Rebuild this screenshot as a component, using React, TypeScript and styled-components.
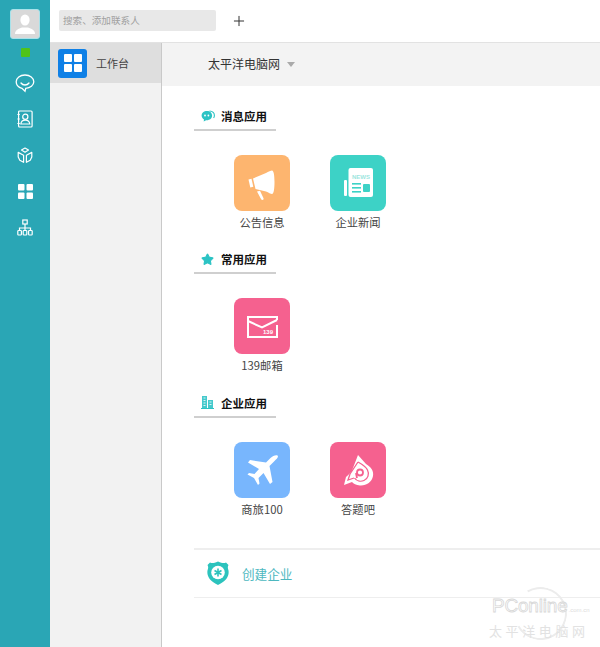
import styled, { createGlobalStyle } from 'styled-components';
import { Plus, Star } from 'lucide-react';
import type { ReactNode } from 'react';

const GlobalStyle = createGlobalStyle`
	html, body {
		margin: 0;
		padding: 0;
		background: #fff;
		font-family: "Noto Sans CJK SC", "Liberation Sans", sans-serif;
		color: #333;
	}
`;

const Page = styled.div`
	position: relative;
	display: flex;
	width: 600px;
	height: 647px;
	overflow: hidden;
`;

const Rail = styled.nav`
	width: 50px;
	flex: none;
	background: #2aa6b5;
	display: flex;
	flex-direction: column;
	align-items: center;
	padding-top: 9px;
	box-sizing: border-box;
`;

const Avatar = styled.div`
	width: 28px;
	height: 28px;
	border-radius: 3px;
	border: 1px solid #a8e2ea;
	background: #d9d9d9;
	display: flex;
	align-items: center;
	justify-content: center;
`;

const Status = styled.div`
	width: 9px;
	height: 9px;
	flex: none;
	margin-top: 9px;
	margin-bottom: 8px;
	border-radius: 1px;
	background: #4fc31a;
`;

const RailIcon = styled.div`
	width: 50px;
	height: 36px;
	display: flex;
	align-items: center;
	justify-content: center;
`;

const Body = styled.div`
	flex: 1;
	display: flex;
	flex-direction: column;
	min-width: 0;
`;

const TopBar = styled.header`
	height: 41px;
	flex: none;
	border-bottom: 1px solid #e2e2e2;
	display: flex;
	align-items: center;
	padding: 0 9px 1px;
`;

const Search = styled.div`
	width: 153px;
	height: 21px;
	padding-left: 4px;
	background: #e8e8e8;
	border-radius: 2px;
	font-size: 9.6px;
	line-height: 21px;
	color: #a0a0a0;
`;

const AddButton = styled.div`
	margin-left: 15px;
	display: flex;
	color: #333;
`;

const Columns = styled.div`
	flex: 1;
	display: flex;
	min-height: 0;
`;

const Side = styled.aside`
	width: 112px;
	flex: none;
	box-sizing: border-box;
	background: #f2f2f2;
	border-right: 1px solid #c9c9c9;
`;

const SideItem = styled.div`
	height: 40px;
	background: #dedede;
	display: flex;
	align-items: center;
	gap: 9px;
	padding-left: 8px;
	font-size: 11px;
	color: #444;
`;

const SideLogo = styled.div`
	width: 29px;
	height: 29px;
	border-radius: 3px;
	background: #0f80e6;
	display: flex;
	align-items: center;
	justify-content: center;
`;

const Main = styled.main`
	flex: 1;
	min-width: 0;
	display: flex;
	flex-direction: column;
`;

const OrgBar = styled.div`
	height: 41px;
	flex: none;
	padding: 0 0 2px 46px;
	background: #f3f3f3;
	display: flex;
	align-items: center;
	font-size: 12px;
	color: #333;
`;

const Caret = styled.span`
	margin-left: 7px;
	margin-top: 2px;
	width: 0;
	height: 0;
	border-left: 4px solid transparent;
	border-right: 4px solid transparent;
	border-top: 5px solid #aaa;
`;

const Content = styled.div`
	padding: 17px 0 0 32px;
`;

const Section = styled.section`
	height: 143.3px;
`;

const SectionHead = styled.div`
	width: 82px;
	height: 28px;
	border-bottom: 2px solid #cfcfcf;
	display: flex;
	align-items: center;
	box-sizing: border-box;
`;

const HeadIcon = styled.div`
	width: 27px;
	display: flex;
	justify-content: center;
`;

const HeadTitle = styled.h3`
	margin: 0;
	font-size: 11.5px;
	font-weight: 700;
	color: #111;
	white-space: nowrap;
`;

const AppRow = styled.div`
	display: flex;
	gap: 40px;
	padding: 24px 0 0 40px;
`;

const AppItem = styled.div`
	width: 56px;
	display: flex;
	flex-direction: column;
	align-items: center;
`;

const Tile = styled.div<{ $bg: string }>`
	width: 56px;
	height: 56px;
	border-radius: 8px;
	background: ${(p) => p.$bg};
	display: flex;
`;

const AppLabel = styled.span`
	margin-top: 3px;
	font-size: 11.3px;
	line-height: 16px;
	color: #444;
	white-space: nowrap;
`;

const CreateRow = styled.div`
	margin-top: 15px;
	height: 50px;
	box-sizing: border-box;
	border-top: 2px solid #eee;
	border-bottom: 1px solid #eee;
	display: flex;
	align-items: center;
	padding-left: 13px;
	gap: 13px;
	font-size: 12.6px;
	color: #4db8bf;
`;

const Watermark = styled.div`
	position: absolute;
	left: 489px;
	top: 585px;
	width: 106px;
	height: 58px;
	pointer-events: none;
`;

const WatermarkArc = styled.div`
	position: absolute;
	left: 25px;
	top: 2px;
	width: 53px;
	height: 53px;
	box-sizing: border-box;
	border: 2px solid #ececec;
	border-left-color: transparent;
	border-radius: 50%;
	transform: rotate(15deg);
`;

const WatermarkBrand = styled.div`
	position: relative;
	margin-top: 10px;
	padding-left: 3px;
	font-family: "Liberation Sans", sans-serif;
	font-size: 19px;
	line-height: 22px;
	letter-spacing: -0.2px;
	color: #fff;
	-webkit-text-stroke: 0.8px #d8d8d8;
`;

const WatermarkDomain = styled.span`
	font-size: 6px;
	letter-spacing: 0;
	margin-left: 1px;
	color: #ddd;
	-webkit-text-stroke: 0;
`;

const WatermarkCn = styled.div`
	position: relative;
	margin-top: 2px;
	font-size: 13px;
	line-height: 16px;
	white-space: nowrap;
	letter-spacing: 3.6px;
	color: #e2e2e2;
`;

const GridIcon = ({ size, cell, gap }: { size: number; cell: number; gap: number }) => {
	const second = cell + gap;
	return (
		<svg width={size} height={size} viewBox={`0 0 ${size} ${size}`}>
			<rect width={cell} height={cell} rx="1" fill="#fff" />
			<rect x={second} width={cell} height={cell} rx="1" fill="#fff" />
			<rect y={second} width={cell} height={cell} rx="1" fill="#fff" />
			<rect x={second} y={second} width={cell} height={cell} rx="1" fill="#fff" />
		</svg>
	);
};

const ChatIcon = () => (
	<svg width="20" height="19" viewBox="0 0 20 19" fill="none" stroke="#fff" strokeWidth="1.3">
		<path d="M10 1C5 1 1.200 3.900 1.200 7.800c0 3.200 2.400 5.700 5.800 6.500l3 3 .7-2.900c4.600-.3 8.100-3.100 8.100-6.600C18.800 3.900 15 1 10 1z" />
		<path d="M6 9c1 1.400 2.500 2 4 2s3-.6 4-2" strokeLinecap="round" />
	</svg>
);

const ContactIcon = () => (
	<svg width="16" height="18" viewBox="0 0 16 18" fill="none" stroke="#fff" strokeWidth="1.2">
		<rect x="1.600" y="1" width="13.500" height="16" rx="1" />
		<circle cx="8.300" cy="6.800" r="2.600" />
		<path d="M3.800 14c.4-2.600 2.300-3.800 4.500-3.800s4.100 1.200 4.500 3.800z" />
		<path d="M.4 4.500h2.400M.4 9h2.400M.4 13.500h2.400" />
	</svg>
);

const CubeIcon = () => (
	<svg width="16" height="17" viewBox="0 0 16 17" fill="none" stroke="#fff" strokeWidth="1.2" strokeLinejoin="round">
		<path d="M8 1l3.500 2L8 5.200 4.500 3z" />
		<path d="M1.200 5.400l5.400 2.900v7L2.800 13.200 1.200 10z" />
		<path d="M14.800 5.400L9.400 8.300v7l3.800-2.100 1.600-3.200z" />
	</svg>
);

const OrgIcon = () => (
	<svg width="16" height="17" viewBox="0 0 16 17" fill="none" stroke="#fff" strokeWidth="1.2">
		<rect x="5.800" y="1" width="4.400" height="4" />
		<path d="M8 5v4M2.500 11.500V9h11v2.500M8 9v2.500" />
		<rect x=".8" y="11.500" width="3.600" height="4.500" rx=".8" />
		<rect x="6.200" y="11.500" width="3.600" height="4.500" rx=".8" />
		<rect x="11.600" y="11.500" width="3.600" height="4.500" rx=".8" />
	</svg>
);

const PersonIcon = () => (
	<svg width="22" height="22" viewBox="0 0 22 22" fill="#fff">
		<ellipse cx="11" cy="7" rx="4.600" ry="5.600" />
		<path d="M1 21c0-4 3.500-5.500 7-6.500h6c3.500 1 7 2.500 7 6.500z" />
	</svg>
);

const BubbleIcon = () => (
	<svg width="14" height="12" viewBox="0 0 14 12">
		<path d="M6 1C2.800 1 .6 3 .6 5.600c0 1.700 1 3.200 2.400 4l-.3 2 2.400-1.300c3.400.3 6-1.800 6-4.700C11.100 3 9 1 6 1z" fill="#2cc3c4" />
		<circle cx="4" cy="5.500" r=".9" fill="#fff" />
		<circle cx="7.400" cy="5.500" r=".9" fill="#fff" />
		<path d="M8.500 1c2.800.2 4.900 2 4.900 4.500 0 .9-.3 1.800-.8 2.500" fill="none" stroke="#2cc3c4" strokeWidth="1.100" />
	</svg>
);

const BuildingIcon = () => (
	<svg width="13" height="13" viewBox="0 0 13 13">
		<path d="M1 0h5v12H1zM7 4h5v8H7z" fill="#45c9cc" />
		<path d="M2.500 2h2M2.500 4.500h2M2.500 7h2M2.500 9.500h2M8.500 6h2M8.500 8.500h2" stroke="#d9f5f5" strokeWidth="1" />
		<path d="M0 12.500h13" stroke="#2cc3c4" strokeWidth="1" />
	</svg>
);

// the tile drawings below use the tile's own 56x56 coordinates
const TileArt = styled.svg.attrs({ viewBox: '0 0 56 56' })`
	width: 56px;
	height: 56px;
`;

const MegaphoneIcon = () => (
	<TileArt fill="#fff">
		<path d="M14.500 24.500l3-.8 1.800 8-3 .8z" />
		<path d="M19 23.500l13-5.500c2.500-1.200 5-2.500 6-2.500 1.800 0 2.500 5 2.500 11.500S39.800 39 38 39c-1.200 0-3.500-1.500-6-2.500L21.500 34z" />
		<path d="M23 36.500l3-.7 3.500 7.500c.4 1-.2 1.700-1 1.700-.7 0-1.200-.4-1.500-1z" />
	</TileArt>
);

const NewsIcon = () => (
	<TileArt>
		<rect x="14" y="25" width="3" height="16" rx="1" fill="#fff" />
		<path d="M18.500 15a2 2 0 0 1 2-2H41a2 2 0 0 1 2 2v25a2 2 0 0 1-2 2H20.500a2 2 0 0 1-2-2z" fill="#fff" />
		<text x="22" y="24" fontSize="6" fontWeight="700" fontFamily="Liberation Sans, sans-serif" fill="#9de6e0">NEWS</text>
		<rect x="22" y="28" width="9" height="1.600" fill="#3dd2c6" />
		<rect x="22" y="32" width="9" height="1.600" fill="#3dd2c6" />
		<rect x="22" y="36" width="9" height="1.600" fill="#3dd2c6" />
		<rect x="33" y="29" width="7" height="8" rx="1" fill="#3dd2c6" />
	</TileArt>
);

const MailIcon = () => (
	<TileArt fill="none" stroke="#fff" strokeWidth="2">
		<path d="M43 27v12H14V19h29v3" />
		<path d="M14 23l14 6.500L43 22" />
		<text x="29" y="36" fontSize="6" fontWeight="700" fontFamily="Liberation Sans, sans-serif" fill="#fff" stroke="none">139</text>
	</TileArt>
);

const PlaneIcon = () => (
	<TileArt fill="#fff">
		<path d="M43.500 13.500C42 12.500 38.500 14 36.500 16L32 20.500 16 18l-2 2.500L25 27l-4.500 5-5.500-1-1.500 1.500L20 36l4 7 1.500-1.500-1-5.500 5-5L36 42l2.500-2-3-16 5-5c2-2 4.500-4 3-5.500z" />
	</TileArt>
);

const QuizIcon = () => (
	<TileArt>
		<path d="M28 13l8 9c5 3 8 7 7 12-1 6-7 10-13 9.500-4-.3-6.500-2-8-3.500l-8 3 2-8c3-3 6-5 7-9z" fill="#fff" />
		<path d="M28 20L20 32l-2 6 6-2" fill="none" stroke="#f5618f" strokeWidth="1.300" />
		<path d="M24.500 36c2 3 6 4 9.500 2.500 4-1.700 5.500-6.500 3.500-10.500-1-2-4-5-9.500-8" fill="none" stroke="#f5618f" strokeWidth="1.300" />
		<circle cx="30" cy="30.500" r="3" fill="none" stroke="#f5618f" strokeWidth="1.800" />
		<path d="M26 31l1 5" stroke="#f5618f" strokeWidth="1.800" />
	</TileArt>
);

const BadgeIcon = () => (
	<svg width="22" height="25" viewBox="0 0 22 25">
		<path d="M3 1.500c2 1 3.800.8 8-1 4.200 1.800 6 2 8 1l2.500 2.500c-1 2-.8 3 0 5.500.8 5-1.500 10.500-10.500 14.500C2 20-.3 14.500.5 9.500c.8-2.500 1-3.500 0-5.500z" fill="#2cc3bd" />
		<circle cx="11" cy="11.500" r="6.800" fill="#fff" />
		<path d="M11 7.500v8M7.500 9.500l7 4M14.500 9.500l-7 4" stroke="#2cc3bd" strokeWidth="1.600" />
	</svg>
);

function AppTile({ bg, label, children }: { bg: string; label: string; children: ReactNode }) {
	return (
		<AppItem>
			<Tile $bg={bg}>{children}</Tile>
			<AppLabel>{label}</AppLabel>
		</AppItem>
	);
}

function App() {
	return (
		<Page>
			<GlobalStyle />
			<Rail>
				<Avatar>
					<PersonIcon />
				</Avatar>
				<Status />
				<RailIcon>
					<ChatIcon />
				</RailIcon>
				<RailIcon>
					<ContactIcon />
				</RailIcon>
				<RailIcon>
					<CubeIcon />
				</RailIcon>
				<RailIcon>
					<GridIcon size={15} cell={6.5} gap={2} />
				</RailIcon>
				<RailIcon>
					<OrgIcon />
				</RailIcon>
			</Rail>
			<Body>
				<TopBar>
					<Search>搜索、添加联系人</Search>
					<AddButton>
						<Plus size={16} strokeWidth={1.5} />
					</AddButton>
				</TopBar>
				<Columns>
					<Side>
						<SideItem>
							<SideLogo>
								<GridIcon size={18} cell={8} gap={2} />
							</SideLogo>
							工作台
						</SideItem>
					</Side>
					<Main>
						<OrgBar>
							太平洋电脑网
							<Caret />
						</OrgBar>
						<Content>
							<Section>
								<SectionHead>
									<HeadIcon>
										<BubbleIcon />
									</HeadIcon>
									<HeadTitle>消息应用</HeadTitle>
								</SectionHead>
								<AppRow>
									<AppTile bg="#fdb56f" label="公告信息">
										<MegaphoneIcon />
									</AppTile>
									<AppTile bg="#3dd2c6" label="企业新闻">
										<NewsIcon />
									</AppTile>
								</AppRow>
							</Section>
							<Section>
								<SectionHead>
									<HeadIcon>
										<Star size={13} fill="#2cc3c4" color="#2cc3c4" />
									</HeadIcon>
									<HeadTitle>常用应用</HeadTitle>
								</SectionHead>
								<AppRow>
									<AppTile bg="#f5618f" label="139邮箱">
										<MailIcon />
									</AppTile>
								</AppRow>
							</Section>
							<Section>
								<SectionHead>
									<HeadIcon>
										<BuildingIcon />
									</HeadIcon>
									<HeadTitle>企业应用</HeadTitle>
								</SectionHead>
								<AppRow>
									<AppTile bg="#78b6fd" label="商旅100">
										<PlaneIcon />
									</AppTile>
									<AppTile bg="#f5618f" label="答题吧">
										<QuizIcon />
									</AppTile>
								</AppRow>
							</Section>
							<CreateRow>
								<BadgeIcon />
								创建企业
							</CreateRow>
						</Content>
					</Main>
				</Columns>
			</Body>
			<Watermark>
				<WatermarkArc />
				<WatermarkBrand>
					PConline
					<WatermarkDomain>.com.cn</WatermarkDomain>
				</WatermarkBrand>
				<WatermarkCn>太平洋电脑网</WatermarkCn>
			</Watermark>
		</Page>
	);
}

export default App;
